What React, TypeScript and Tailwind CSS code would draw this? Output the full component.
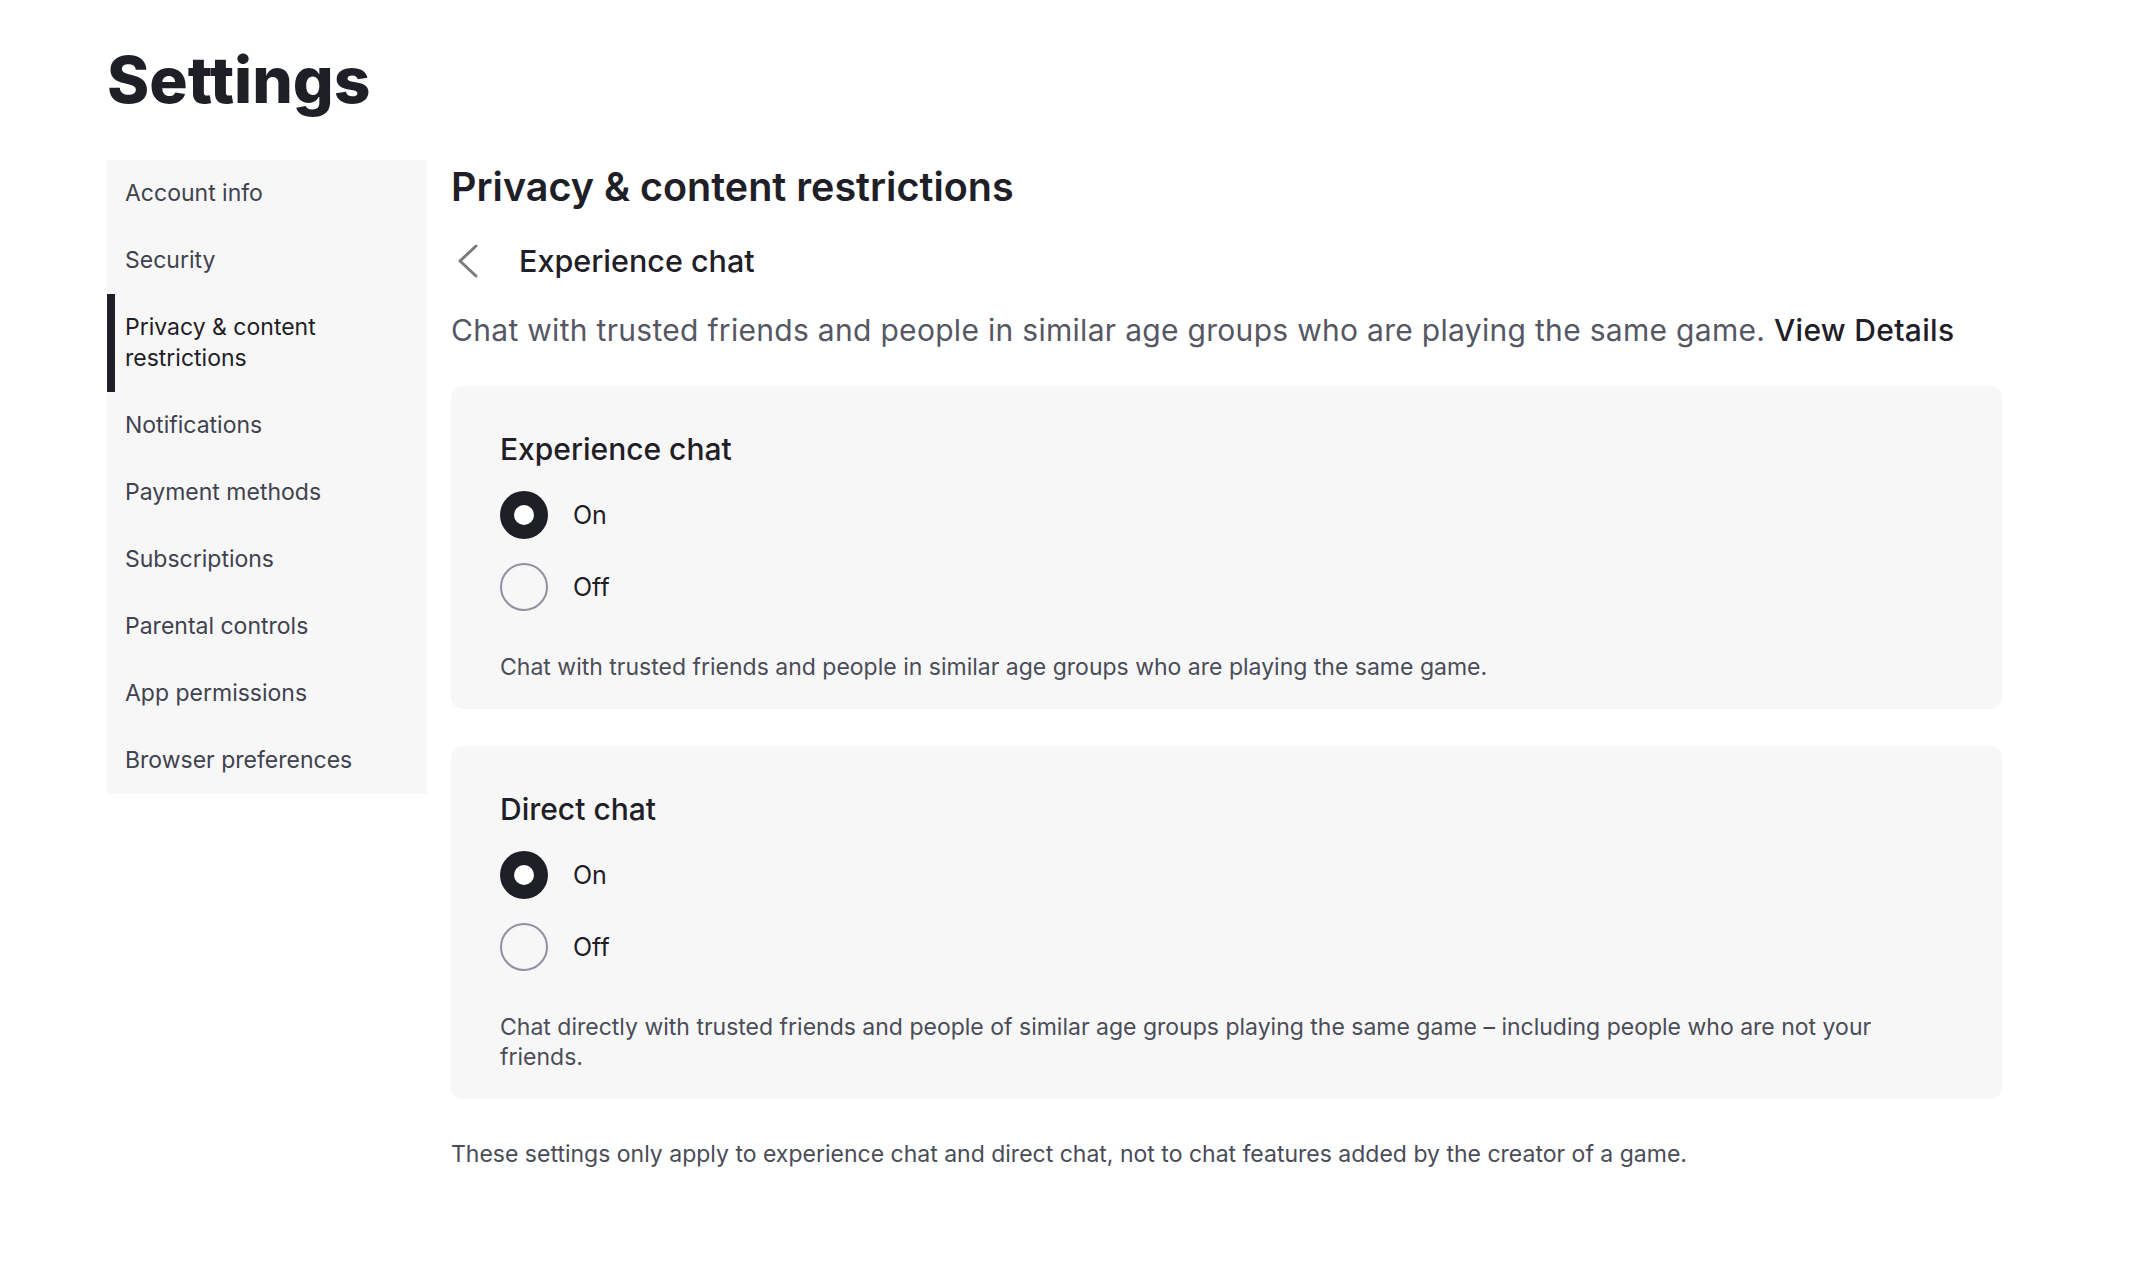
import React from "react";

const items = [
  "Account info",
  "Security",
  "Privacy & content restrictions",
  "Notifications",
  "Payment methods",
  "Subscriptions",
  "Parental controls",
  "App permissions",
  "Browser preferences",
];

function Radio({ checked, label }: { checked: boolean; label: string }) {
  return (
    <div className="flex h-[48px] items-center">
      {checked ? (
        <div className="flex h-[48px] w-[48px] items-center justify-center rounded-full bg-[#1f2027]">
          <div className="h-[20px] w-[20px] rounded-full bg-white" />
        </div>
      ) : (
        <div className="h-[48px] w-[48px] rounded-full border-2 border-[#8f90a3]" />
      )}
      <span className="ml-[25px] text-[25px] leading-[32px] text-[#1f2027]">{label}</span>
    </div>
  );
}

function Card({ title, desc }: { title: string; desc: string }) {
  return (
    <div className="rounded-[12px] bg-[#f7f7f7] px-[49px] pt-[43px] pb-[27px]">
      <div className="text-[30px] font-medium leading-[40px] text-[#1f2027]">{title}</div>
      <div className="mt-[22px] flex flex-col gap-[24px]">
        <Radio checked label="On" />
        <Radio checked={false} label="Off" />
      </div>
      <p className="mt-[41px] max-w-[1400px] text-[23px] leading-[30px] text-[#4a4c57]">{desc}</p>
    </div>
  );
}

export default function App() {
  return (
    <div
      className="min-h-screen w-full bg-white pl-[107px] pt-[48px]"
      style={{ fontFamily: "Inter, 'Noto Sans', sans-serif" }}
    >
      <h1 className="text-[64px] font-extrabold leading-[64px] text-[#1f2027]">Settings</h1>
      <div className="mt-[48px] flex items-start">
        <nav className="w-[320px] bg-[#f7f7f7]">
          {items.map((it, i) => {
            const active = i === 2;
            return (
              <div
                key={it}
                className={
                  active
                    ? "border-l-[8px] border-[#1f2027] py-[18px] pl-[10px] pr-[20px] text-[23px] leading-[31px] text-[#1f2027]"
                    : "border-l-[8px] border-transparent py-[18px] pl-[10px] pr-[20px] text-[23px] leading-[31px] text-[#40424f]"
                }
              >
                {active ? (
                  <>
                    Privacy &amp; content
                    <br />
                    restrictions
                  </>
                ) : (
                  it
                )}
              </div>
            );
          })}
        </nav>
        <main className="ml-[24px] w-[1551px]">
          <h2 className="mt-[1px] text-[39.5px] font-semibold leading-[52px] text-[#1f2027]">
            Privacy &amp; content restrictions
          </h2>
          <div className="mt-[24px] flex h-[48px] items-center">
            <svg width="22" height="34" viewBox="0 0 22 34" className="ml-[6px]" fill="none">
              <polyline points="19,2 3,17 19,32" stroke="#7b7b7b" strokeWidth="3" strokeLinecap="round" strokeLinejoin="round" />
            </svg>
            <span className="ml-[40px] text-[30.5px] font-medium leading-[48px] text-[#1f2027]">Experience chat</span>
          </div>
          <p className="mt-[25px] text-[30px] tracking-[0.01em] leading-[40px] text-[#555764]">
            Chat with trusted friends and people in similar age groups who are playing the same game.{" "}
            <span className="font-medium text-[#1f2027]">View Details</span>
          </p>
          <div className="mt-[36px] flex flex-col gap-[37px]">
            <Card
              title="Experience chat"
              desc="Chat with trusted friends and people in similar age groups who are playing the same game."
            />
            <Card
              title="Direct chat"
              desc="Chat directly with trusted friends and people of similar age groups playing the same game – including people who are not your friends."
            />
          </div>
          <p className="mt-[40px] text-[23px] leading-[30px] text-[#4a4c57]">
            These settings only apply to experience chat and direct chat, not to chat features added by the creator of a game.
          </p>
        </main>
      </div>
    </div>
  );
}
